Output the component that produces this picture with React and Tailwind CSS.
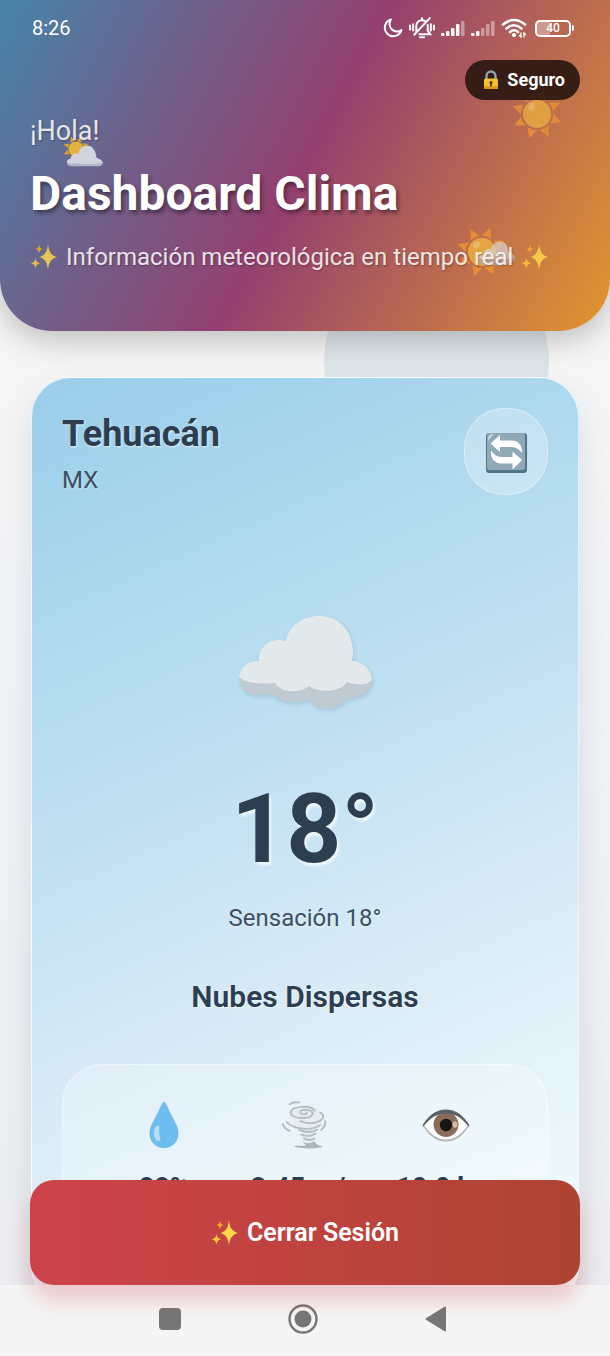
const Sparkles = ({ className }) => (
  <svg viewBox="0 0 28 28" className={className} aria-hidden="true">
    <path fill="#fdd84a" d="M18 1C18.800 8.500 20.800 12.300 27 14C20.800 15.700 18.800 19.500 18 27C17.200 19.500 15.200 15.700 9.500 14C15.200 12.300 17.200 8.500 18 1Z" />
    <path fill="#f4a92a" d="M9 1.500C9.400 4.500 10.200 5.400 12.800 6C10.200 6.700 9.400 7.600 9 10.500C8.600 7.600 7.800 6.700 5.200 6C7.800 5.400 8.600 4.500 9 1.500Z" />
    <path fill="#fbc53a" d="M5.500 14.500C6 18.300 7 19.500 10.500 20.200C7 21 6 22.400 5.500 26C5 22.400 4 21 .5 20.200C4 19.500 5 18.300 5.500 14.500Z" />
  </svg>
);

const RAYS = [0, 45, 90, 135, 180, 225, 270, 315];

const Sun = ({ className }) => (
  <svg viewBox="0 0 50 50" className={className} aria-hidden="true">
    <g fill="#f59a2c">
      {RAYS.map((a) => (
        <path key={a} d="M20 9.500L25 -.5L30 9.500Q25 8 20 9.500Z" transform={`rotate(${a + 18} 25 25)`} />
      ))}
    </g>
    <circle cx="25" cy="25" r="14" fill="#f4bb3e" />
    <ellipse cx="19.500" cy="18" rx="4" ry="3" fill="#f9d873" transform="rotate(-40 19.500 18)" />
  </svg>
);

const SunBehindCloud = ({ className }) => (
  <svg viewBox="0 0 42 32" className={className} aria-hidden="true">
    <g fill="#f2a51f">
      {RAYS.map((a) => (
        <path key={a} d="M11.500 5L14 -.5L16.500 5Z" transform={`rotate(${a + 22} 14 13)`} />
      ))}
    </g>
    <circle cx="14" cy="13" r="7.500" fill="#fbc02d" />
    <path fill="#e3e8ee" d="M10 30C4 30 3 23 9 22.500C9 18.500 13 16.500 16.500 18C18 7 32 6 34 19C34 21 34.500 22 36 22.500C42 23.500 42 30 37 30Z" />
    <path fill="#b9c7d3" d="M5.500 26.500C8 28 13 27.500 17 27.500C24 28.500 34 28.500 40.500 26.500C40.500 29 39 30.300 37 30.300H10C7 30.300 5.600 29 5.500 26.500Z" />
  </svg>
);

const Cloud = ({ className }) => (
  <svg viewBox="0 0 136 98" className={className} aria-hidden="true">
    <path fill="#bfcbd1" d="M2 60C2 73 9 80 21 80C28 80 33 78 36 79C43 88 61 90 71 84C79 96 103 97 110 83C122 84 134 78 135 66Z" />
    <path fill="#e4eaec" d="M2 62C3 52 11 46 22 46C21 31 34 22 49 26C52 10 66 1 82 1C104 1 117 19 116 40C115 43 115 45 115 46C125 46 134 54 135 65C130 71 118 70 110 67C103 78 81 78 72 71C63 79 44 78 38 68C27 69 9 69 2 62Z" />
  </svg>
);

const Lock = ({ className }) => (
  <svg viewBox="0 0 16 20" className={className} aria-hidden="true">
    <path fill="none" stroke="#8da3b0" strokeWidth="2.400" d="M3.500 10V6a4.500 4.500 0 0 1 9 0v4" />
    <rect x="1" y="8.500" width="14" height="10.500" rx="1.500" fill="#f3c12f" />
    <path fill="#d99a1d" d="M1 16h14v1.500a1.500 1.500 0 0 1-1.500 1.500h-11A1.500 1.500 0 0 1 1 17.500Z" />
    <path fill="#4e3a1c" d="M8 11a1.600 1.600 0 0 1 .8 3v2.500H7.200V14A1.600 1.600 0 0 1 8 11Z" />
  </svg>
);

const Refresh = ({ className }) => (
  <svg viewBox="0 0 41 41" className={className} aria-hidden="true">
    <rect width="41" height="40" y="1" rx="3" fill="#4f7488" />
    <rect x="1" y="1" width="38" height="37" rx="2" fill="#90a9b5" />
    <path fill="#c6d8e0" d="M2 7Q2 2 8 2L2 9Z" />
    <path fill="#fff" d="M4.500 11.500L14 3V8.500H26Q36 9 36 21Q32 15.500 26 15H14V20Z" />
    <path fill="#fff" d="M36 28L26.500 19.500V25H15Q9 24.500 5 18.500Q4 30.500 15 31.500H26.500V37.500Z" />
  </svg>
);

const Drop = ({ className }) => (
  <svg viewBox="0 0 48 48" className={className} aria-hidden="true">
    <path fill="#6dbdee" d="M24 1C26.500 1 28 8 33 17C36 22.500 38.500 27 38.500 32.500C38.500 41 32 47 24 47S9.500 41 9.500 32.500C9.500 27 12 22.500 15 17C20 8 21.500 1 24 1Z" />
    <path fill="#b5def7" d="M17.500 24.500C21 24.500 18 31 20 36C22 40.500 17 41 15 37.500C12.500 33 14.500 25 17.500 24.500Z" />
  </svg>
);

const Tornado = ({ className }) => (
  <svg viewBox="0 0 48 50" className={className} aria-hidden="true">
    <path fill="#e6ecef" d="M9 9C16 2 36 4 43 14C42 24 36 28 34 34L32 44H21L22 34C14 27 7 20 9 9Z" />
    <g fill="none" stroke="#b3bfc4" strokeWidth="2" strokeLinecap="round">
      <path d="M8 3.500C11 1 15 1 18 1.500" />
      <path d="M34 10C30 4 10 5 9 12C10 19 31 20 32 13C31 8 18 8 19 12C21 15 26 14 26 12" />
      <path d="M40 12C50 18 34 27 19 21" />
      <path d="M1 24C2 28 5 30 8 31M5 22C12 29 30 32 40 25" />
      <path d="M45 21C46 26 43 28 41 30M18 30C24 33 32 33 37 30" />
      <path d="M20 35C26 37 31 37 35 34M23 39C27 41 31 41 34 39" />
    </g>
    <path fill="#aab7bd" d="M22 43C27 45 31 44 34 42L36 45L43 48C34 50 20 50 12 47.500C16 45 20 48 25 46Z" />
  </svg>
);

const Eye = ({ className }) => (
  <svg viewBox="0 0 48 48" className={className} aria-hidden="true">
    <path fill="#b5b9bb" d="M1 25C8 36 15 40.500 24 40.500S40 36 47 25L24 12Z" />
    <path fill="#fff" d="M2 24C9 14 16 10 24 10S39 14 46 24C39 34 32 38.500 24 38.500S9 34 2 24Z" />
    <circle cx="24" cy="23.500" r="12.500" fill="#8d6b5b" />
    <circle cx="24" cy="24" r="6.200" fill="#151515" />
    <ellipse cx="33" cy="23.500" rx="2.500" ry="3.200" fill="#d8b8a6" />
    <path fill="#5d6063" d="M1 26C.5 24 1 23 2 22C9 12 16 8.500 24 8.500S39 12 46 22C47 23 47.500 24 47 26C39 16 33 12.500 24 12.500S9 16 1 26Z" />
  </svg>
);

const Signal = ({ level }) => (
  <svg viewBox="0 0 24 16" className="h-4 w-6" fill="#fff" aria-hidden="true">
    {[3, 5, 8, 12, 15].map((h, i) => (
      <rect key={h} x={i * 5} y={16 - h} width="3.500" height={h} rx="1" opacity={i < level ? 0.95 : 0.4} />
    ))}
  </svg>
);

const StatusIcons = () => (
  <div className="flex items-center gap-1.5">
    <svg viewBox="0 0 20 20" className="h-5 w-5" fill="none" stroke="#fff" strokeWidth="2" strokeLinejoin="round" aria-hidden="true">
      <path d="M8 1.500A8.500 8.500 0 1 0 18.500 12A7.500 7.500 0 0 1 8 1.500Z" />
    </svg>
    <svg viewBox="0 0 25 21" className="h-5.5 w-6.5" fill="none" stroke="#fff" strokeWidth="1.900" strokeLinecap="round" aria-hidden="true">
      <path d="M5 17L20 1M7 14V8.500C7 5 9.500 3 12.500 3C13.500 3 14.500 3.200 15.500 3.800M18 7.500V13L20.500 16.500H10M10.500 19.500H14.500M12.500 1V2.500M1 8V12M4 7V13M24 8V12M21 7V13" />
    </svg>
    <Signal level={4} />
    <Signal level={2} />
    <svg viewBox="0 0 26 20" className="h-5 w-6.5" fill="none" stroke="#fff" strokeWidth="2.600" strokeLinecap="round" aria-hidden="true">
      <path d="M2 6.500Q13 -2.500 24 6.500M5.500 10.500Q13 4 20.500 10.500M9 14Q13 10.500 17 14" />
      <circle cx="13" cy="17" r="1.300" fill="#fff" strokeWidth="1.500" />
      <path strokeWidth="1.300" d="M20 15V19L18.500 17.500M23 19V15L24.500 16.500" />
    </svg>
    <div className="ml-0.5 flex items-center gap-px">
      <div className="flex h-[17px] w-9 items-center justify-center rounded-[5px] border-2 border-white bg-linear-to-r from-white/35 from-40% to-transparent to-40% text-xs leading-3 font-medium text-white">40</div>
      <div className="h-1.5 w-0.5 rounded-r-sm bg-white" />
    </div>
  </div>
);

const DETAILS = [
  { Icon: Drop, value: "88%", label: "Humedad" },
  { Icon: Tornado, value: "3.45 m/s", label: "Viento" },
  { Icon: Eye, value: "10.0 km", label: "Visibilidad" },
];

function Header() {
  return (
    <header className="relative z-10 rounded-b-[52px] bg-[linear-gradient(118deg,#4684aa_0%,#94406f_50%,#e3962f_100%)] px-[30px] pb-[58px] text-white shadow-[0_10px_30px_rgba(0,0,0,0.22)]">
      <Sun className="absolute top-[89px] right-[48px] h-[50px] w-[50px] opacity-65" />
      <SunBehindCloud className="absolute top-[136px] left-[62px] h-8 w-[42px] opacity-85" />
      <Sun className="absolute top-[227px] right-[98px] h-[50px] w-[60px] opacity-70" />
      <svg viewBox="0 0 42 28" className="absolute top-[239px] right-[94px] h-7 w-[42px] opacity-75" aria-hidden="true">
        <path fill="#d8cdca" d="M8 24C1 23 3 16 9 16C10 10 14 9 17 10C20 -1 35 0 34 13C40 13 43 20 38 23C30 27 16 27 8 24Z" />
        <path fill="#b6a9a6" d="M4 19C12 22 30 22 41 18C41 23 37 24 33 24C28 28 22 27 19 25C14 28 4 26 4 19Z" />
      </svg>

      <div className="relative flex h-14 items-center justify-between pr-1.5">
        <span className="pl-0.5 text-xl">8:26</span>
        <StatusIcons />
      </div>
      <div className="absolute top-[60px] right-[30px] flex h-10 items-center gap-2 rounded-full bg-[#281510]/90 px-[18px] pr-[15px] text-lg font-bold">
        <Lock className="h-5 w-4" />
        Seguro
      </div>
      <p className="relative mt-[58px] text-[27px] leading-[34px] text-white/85 [text-shadow:1px_1px_2px_rgba(0,0,0,0.3)]">¡Hola!</p>
      <h1 className="relative mt-4 text-5xl leading-[60px] font-bold [text-shadow:2px_3px_4px_rgba(0,0,0,0.45)]">Dashboard Clima</h1>
      <p className="relative mt-[17px] flex items-center gap-2 text-2xl leading-8 whitespace-nowrap text-white/85 [text-shadow:1px_1px_2px_rgba(0,0,0,0.3)]">
        <Sparkles className="h-7 w-7 shrink-0 opacity-85" />
        Información meteorológica en tiempo real
        <Sparkles className="h-7 w-7 shrink-0 opacity-85" />
      </p>
    </header>
  );
}

function WeatherCard() {
  return (
    <section className="relative rounded-[40px] border border-white/70 bg-[linear-gradient(156deg,#9acdea_0%,#b3dbef_27%,#c4e2f3_45%,#d8eaf6_62%,#e9f6fb_83%,#f4fcff_100%)] p-[30px] text-[#2d3e50] shadow-[0_15px_30px_rgba(60,80,110,0.14)]">
      <div className="flex items-start justify-between">
        <div>
          <h2 className="mt-1 text-4xl leading-[44px] font-bold [text-shadow:1px_1px_2px_rgba(255,255,255,0.7)]">Tehuacán</h2>
          <p className="mt-2 text-2xl leading-8 text-[#3d4f62] [text-shadow:1px_1px_2px_rgba(255,255,255,0.4)]">MX</p>
        </div>
        <button type="button" aria-label="Actualizar" className="flex h-[87px] w-[84px] items-center justify-center rounded-[40px] border border-white/40 bg-white/25">
          <Refresh className="mt-0.5 h-[41px] w-[41px]" />
        </button>
      </div>

      <div className="mt-[119px] flex flex-col items-center text-center">
        <Cloud className="h-[98px] w-[136px] drop-shadow-[1px_2px_2px_rgba(70,100,120,0.2)]" />
        <p className="mt-16 text-8xl leading-[104px] font-bold [text-shadow:2px_3px_3px_rgba(255,255,255,0.75)]">18°</p>
        <p className="mt-[21px] text-2xl leading-8 text-[#3d4f62] [text-shadow:1px_1px_2px_rgba(255,255,255,0.5)]">Sensación 18°</p>
        <p className="mt-[43px] text-3xl leading-10 font-semibold [text-shadow:1px_1px_2px_rgba(255,255,255,0.7)]">Nubes Dispersas</p>
      </div>

      <ul className="mt-[47px] grid grid-cols-3 rounded-[40px] border border-white/45 bg-white/25 px-[31px] pt-9 pb-8">
        {DETAILS.map(({ Icon, value, label }) => (
          <li key={label} className="flex flex-col items-center">
            <Icon className="h-12 w-12" />
            <span className="mt-[21px] text-[27px] leading-9 font-bold whitespace-nowrap">{value}</span>
            <span className="mt-2 text-xl leading-7">{label}</span>
          </li>
        ))}
      </ul>
    </section>
  );
}

function SystemNav() {
  const buttonClass = "flex h-12 w-12 items-center justify-center";
  return (
    <nav aria-label="Sistema" className="flex h-[71px] shrink-0 items-center justify-center gap-[85px] bg-[#f5f5f5] pr-1 pb-1">
      <button type="button" aria-label="Recientes" className={buttonClass}>
        <span className="h-[22px] w-[22px] rounded-[4px] bg-[#767676]" />
      </button>
      <button type="button" aria-label="Inicio" className={buttonClass}>
        <svg viewBox="0 0 30 30" className="h-[30px] w-[30px]" aria-hidden="true">
          <circle cx="15" cy="15" r="13.500" fill="none" stroke="#767676" strokeWidth="2.400" />
          <circle cx="15" cy="15" r="8.500" fill="#767676" />
        </svg>
      </button>
      <button type="button" aria-label="Atrás" className={buttonClass}>
        <svg viewBox="0 0 22 26" className="h-[26px] w-[22px]" aria-hidden="true">
          <path d="M20 1.500V24.500L1.500 13Z" fill="#767676" stroke="#767676" strokeWidth="2" strokeLinejoin="round" />
        </svg>
      </button>
    </nav>
  );
}

export default function App() {
  return (
    <div className="flex h-screen flex-col overflow-hidden bg-[#f5f5f5] font-[Roboto,sans-serif]">
      <Header />
      <div className="relative flex min-h-0 flex-1 flex-col">
        <main className="relative min-h-0 flex-1 overflow-y-auto bg-linear-to-b from-[#f6f6f6] via-[#eff1f4] to-[#ecedf1] px-[31px] pt-[46px] [scrollbar-width:none]">
          <div className="absolute -top-[82px] right-[61px] h-[225px] w-[225px] rounded-full bg-[#dfe6ea]" />
          <WeatherCard />
        </main>
        <div className="absolute inset-x-0 bottom-0 z-10 px-[30px]">
          <button type="button" className="flex h-[105px] w-full items-center justify-center gap-2 rounded-3xl bg-linear-to-r from-[#ce434b] via-[#bf433f] to-[#ad4332] text-[25px] font-semibold text-white shadow-[0_16px_20px_rgba(206,67,75,0.24)]">
            <Sparkles className="h-7 w-7" />
            Cerrar Sesión
          </button>
        </div>
      </div>
      <SystemNav />
    </div>
  );
}
